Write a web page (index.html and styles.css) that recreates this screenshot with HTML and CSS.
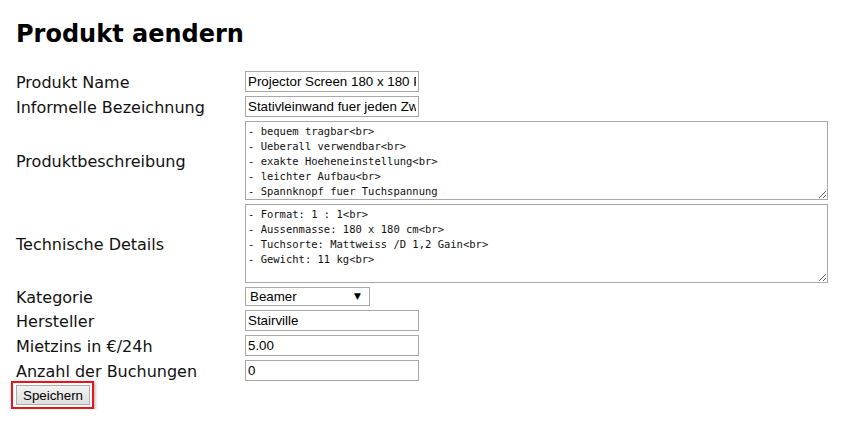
FILE: index.html
```html
<!DOCTYPE html>
<html lang="de">
<head>
<meta charset="utf-8">
<title>Produkt aendern</title>
<link rel="stylesheet" href="styles.css">
</head>
<body>
<div class="page">
  <h1 class="title">Produkt aendern</h1>
  <form class="form">
    <label class="lbl">Produkt Name</label>
    <div class="fld"><input class="txt" type="text" value="Projector Screen 180 x 180 Pro"></div>
    <label class="lbl">Informelle Bezeichnung</label>
    <div class="fld"><input class="txt" type="text" value="Stativleinwand fuer jeden Zweck"></div>
    <label class="lbl">Produktbeschreibung</label>
    <div class="fld"><textarea class="area" rows="5">- bequem tragbar&lt;br&gt;
- Ueberall verwendbar&lt;br&gt;
- exakte Hoeheneinstellung&lt;br&gt;
- leichter Aufbau&lt;br&gt;
- Spannknopf fuer Tuchspannung</textarea></div>
    <label class="lbl">Technische Details</label>
    <div class="fld"><textarea class="area" rows="5">- Format: 1 : 1&lt;br&gt;
- Aussenmasse: 180 x 180 cm&lt;br&gt;
- Tuchsorte: Mattweiss /D 1,2 Gain&lt;br&gt;
- Gewicht: 11 kg&lt;br&gt;</textarea></div>
    <label class="lbl">Kategorie</label>
    <div class="fld"><span class="sel-wrap"><select class="sel"><option>Beamer</option></select><span class="sel-arrow">&#9660;</span></span></div>
    <label class="lbl">Hersteller</label>
    <div class="fld"><input class="txt" type="text" value="Stairville"></div>
    <label class="lbl">Mietzins in €/24h</label>
    <div class="fld"><input class="txt" type="text" value="5.00"></div>
    <label class="lbl">Anzahl der Buchungen</label>
    <div class="fld"><input class="txt" type="text" value="0"></div>
  </form>
  <div class="actions">
    <span class="highlight"><button class="btn" type="button">Speichern</button></span>
  </div>
</div>
</body>
</html>
```

FILE: styles.css
```css
html, body {
  margin: 0;
  padding: 0;
  background: #fff;
}
.page {
  padding: 0 16px;
  font-family: "DejaVu Sans", Verdana, sans-serif;
  color: #000;
}
.title {
  margin: 19px 0 22px;
  font-size: 24px;
  line-height: 30px;
  font-weight: bold;
}
.form {
  display: grid;
  grid-template-columns: 229px auto;
  row-gap: 4px;
  align-items: center;
}
.lbl {
  font-size: 16px;
  line-height: 19px;
  color: #111;
  position: relative;
  top: 1px;
}
.fld {
  display: flex;
  align-items: center;
}
.txt {
  box-sizing: border-box;
  width: 174px;
  height: 21px;
  margin: 0;
  padding: 1px 2px;
  border: 1px solid #a9a9a9;
  font-family: "Liberation Sans", Arial, sans-serif;
  font-size: 13.33px;
  color: #000;
  background: #fff;
  outline: none;
}
.area {
  box-sizing: border-box;
  width: 583px;
  height: 79px;
  margin: 0;
  padding: 2px 2px;
  border: 1px solid #a9a9a9;
  font-family: "DejaVu Sans Mono", Consolas, monospace;
  font-size: 10.5px;
  line-height: 15px;
  color: #111;
  resize: both;
  overflow: hidden;
}
.sel-wrap {
  position: relative;
  display: flex;
}
.sel {
  box-sizing: border-box;
  width: 125px;
  height: 19px;
  margin: 0;
  padding: 0 4px;
  border: 1px solid #a9a9a9;
  -webkit-appearance: none;
  appearance: none;
  background: #fff;
  font-family: "Liberation Sans", Arial, sans-serif;
  font-size: 13.33px;
  color: #000;
  border-radius: 0;
}
.sel-arrow {
  position: absolute;
  right: 9px;
  top: 4px;
  font-size: 9px;
  line-height: 10px;
  color: #000;
  pointer-events: none;
}
.actions {
  margin-top: 0;
  margin-left: -5px;
}
.highlight {
  display: inline-block;
  border: 2px solid #e8141b;
  padding: 2px 2px 2px 3px;
  box-shadow: 1px 1px 3px rgba(0,0,0,0.35);
}
.btn {
  display: block;
  box-sizing: border-box;
  width: 74px;
  height: 20px;
  margin: 0;
  padding: 0 6px;
  border: 1px solid #adadad;
  background: linear-gradient(#f2f2f2, #e0e0e0);
  font-family: "Liberation Sans", Arial, sans-serif;
  font-size: 13.33px;
  color: #000;
  border-radius: 0;
}
```
